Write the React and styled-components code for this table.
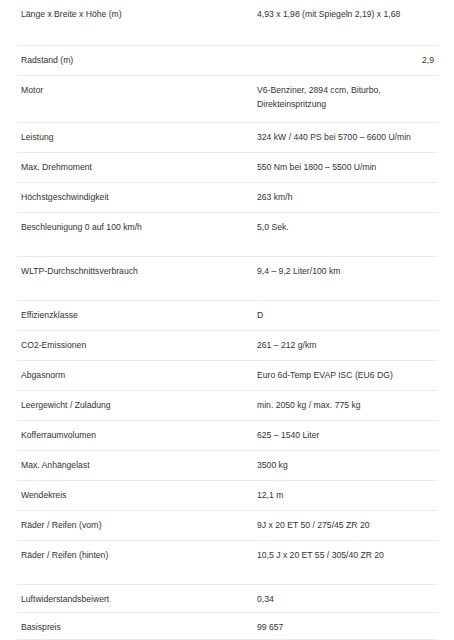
import styled, { createGlobalStyle } from "styled-components";

const rows = [
  { label: "Länge x Breite x Höhe (m)", value: "4,93 x 1,98 (mit Spiegeln 2,19) x 1,68", h: 46 },
  { label: "Radstand (m)", value: "2,9", h: 30, right: true },
  { label: "Motor", value: ["V6-Benziner, 2894 ccm, Biturbo,", "Direkteinspritzung"], h: 46.5 },
  { label: "Leistung", value: "324 kW / 440 PS bei 5700 – 6600 U/min", h: 30 },
  { label: "Max. Drehmoment", value: "550 Nm bei 1800 – 5500 U/min", h: 30 },
  { label: "Höchstgeschwindigkeit", value: "263 km/h", h: 30 },
  { label: "Beschleunigung 0 auf 100 km/h", value: "5,0 Sek.", h: 44 },
  { label: "WLTP-Durchschnittsverbrauch", value: "9,4 – 9,2 Liter/100 km", h: 44.5 },
  { label: "Effizienzklasse", value: "D", h: 29.5 },
  { label: "CO2-Emissionen", value: "261 – 212 g/km", h: 30.5 },
  { label: "Abgasnorm", value: "Euro 6d-Temp EVAP ISC (EU6 DG)", h: 30 },
  { label: "Leergewicht / Zuladung", value: "min. 2050 kg / max. 775 kg", h: 30 },
  { label: "Kofferraumvolumen", value: "625 – 1540 Liter", h: 29.5 },
  { label: "Max. Anhängelast", value: "3500 kg", h: 30 },
  { label: "Wendekreis", value: "12,1 m", h: 30.5 },
  { label: "Räder / Reifen (vorn)", value: "9J x 20 ET 50 / 275/45 ZR 20", h: 30 },
  { label: "Räder / Reifen (hinten)", value: "10,5 J x 20 ET 55 / 305/40 ZR 20", h: 44 },
  { label: "Luftwiderstandsbeiwert", value: "0,34", h: 28.4 },
  { label: "Basispreis", value: "99 657", h: 26.6 },
];

const App = () => {
  return (
    <>
      <GlobalStyle />
      <Page>
        <SpecTable>
          {rows.map((row) => (
            <Row key={row.label} $h={row.h}>
              <Label>{row.label}</Label>
              <Value $right={row.right}>
                {Array.isArray(row.value)
                  ? row.value.map((line) => <Line key={line}>{line}</Line>)
                  : row.value}
              </Value>
            </Row>
          ))}
        </SpecTable>
      </Page>
    </>
  );
};

export default App;

const GlobalStyle = createGlobalStyle`
  body {
    margin: 0;
    background: #ffffff;
    font-family: "Liberation Sans", Arial, sans-serif;
  }
`;

const Page = styled.div`
  padding: 0 17px;
  width: 420px;
`;

const SpecTable = styled.div`
  display: flex;
  flex-direction: column;
`;

const Row = styled.div`
  display: grid;
  grid-template-columns: 236px 1fr;
  box-sizing: border-box;
  height: ${(p) => p.$h}px;
  border-bottom: 1px solid #ebebeb;
  font-size: 8.65px;
  line-height: 14px;
  color: #333333;
`;

const Label = styled.div`
  padding: 7px 4px 0;
`;

const Value = styled.div`
  padding: 7px ${(p) => (p.$right ? "3px" : "4px")} 0 4px;
  text-align: ${(p) => (p.$right ? "right" : "left")};
`;

const Line = styled.div``;
